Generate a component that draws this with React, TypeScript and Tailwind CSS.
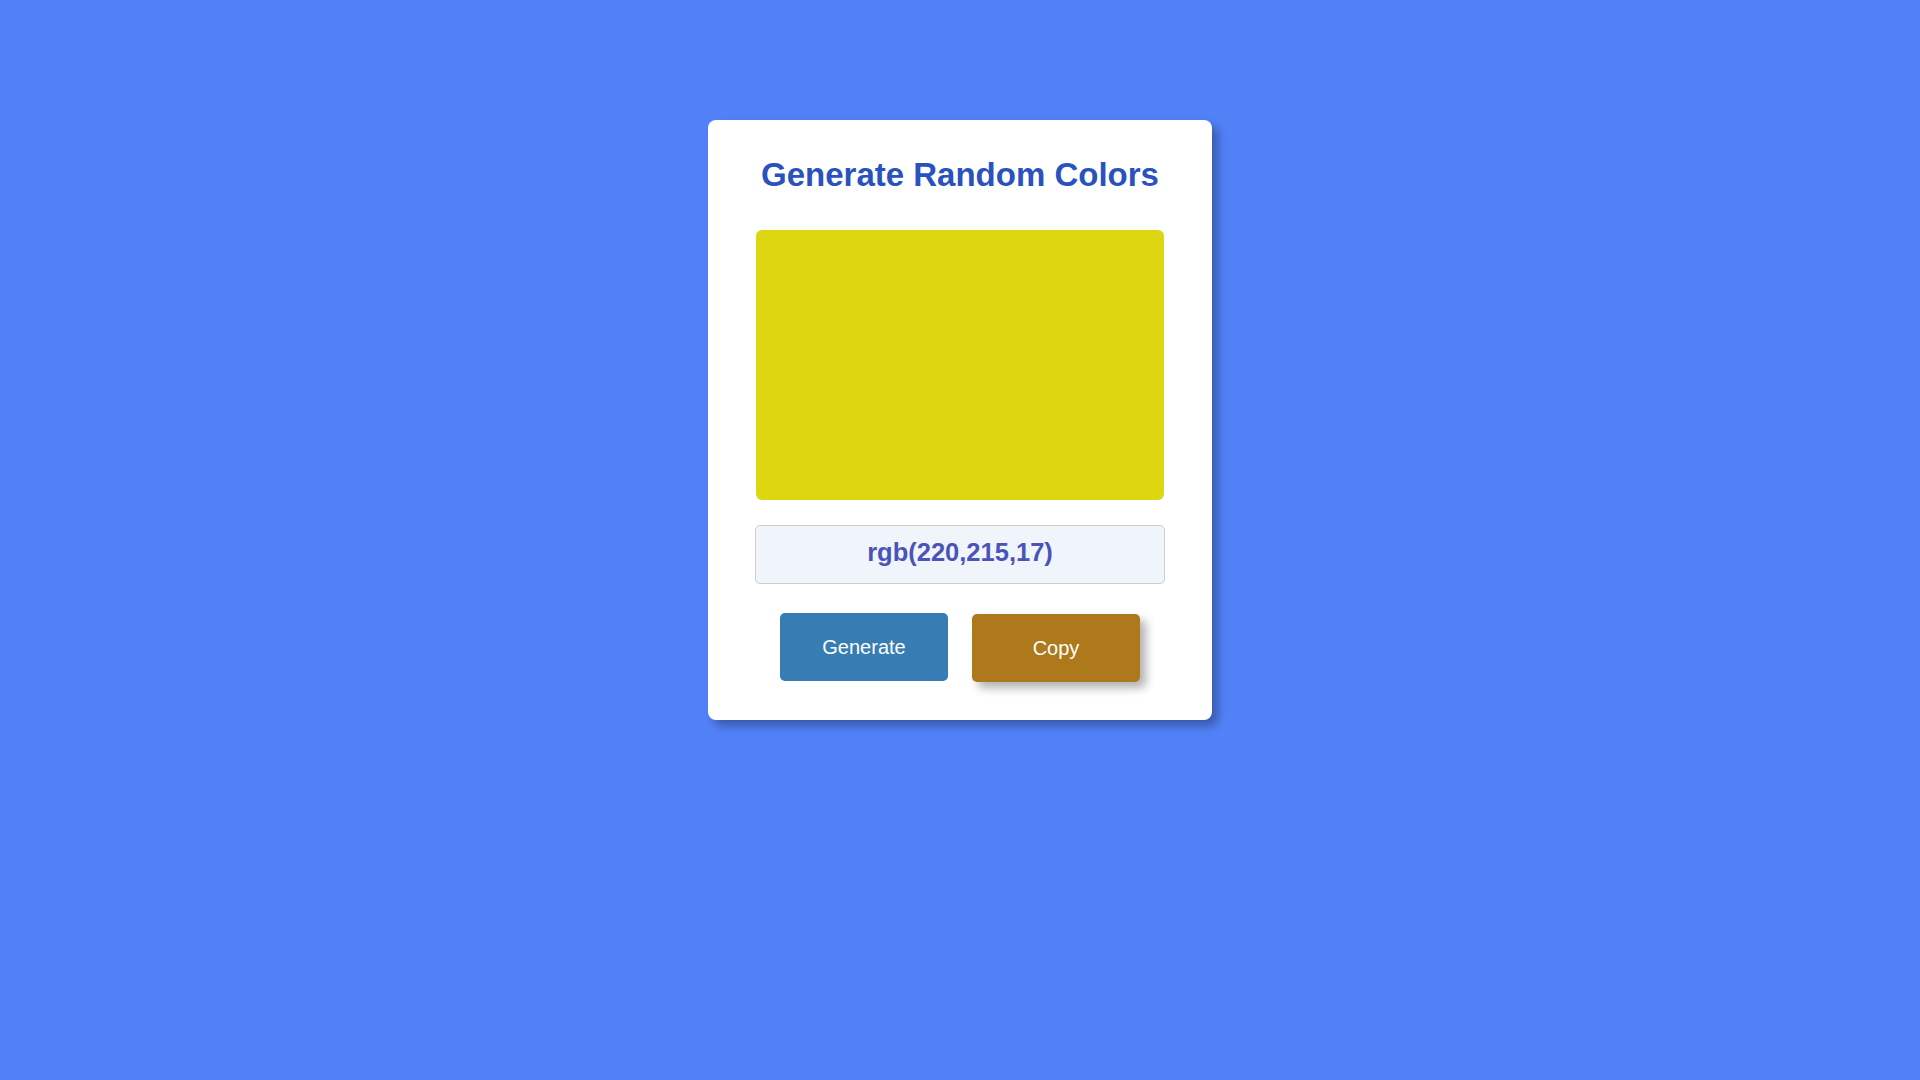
import * as React from "react";

const swatch = { r: 220, g: 215, b: 17 };

export default function App() {
  const value = `rgb(${swatch.r},${swatch.g},${swatch.b})`;

  return (
    <div className="min-h-screen bg-[#5281f7] pt-[120px] font-['Liberation_Sans',Arial,sans-serif]">
      <div className="mx-auto flex h-[600px] w-[504px] flex-col items-center rounded-lg bg-white px-12 pt-[36px] shadow-[6px_6px_10px_rgba(0,0,0,0.3)]">
        <h1 className="text-[33px] font-bold leading-[37px] text-[#2a52be]">
          Generate Random Colors
        </h1>

        <div
          className="mt-[37px] h-[270px] w-[408px] rounded-md"
          style={{ backgroundColor: value }}
        />

        <div className="mt-[25px] flex h-[59px] w-[410px] items-center justify-center rounded-[5px] border border-[#cccccc] bg-[#f0f5fc] pb-[4px] text-[25.5px] font-bold text-[#4a54b8]">
          {value}
        </div>

        <div className="mt-[29px] flex gap-6">
          <button className="h-[68px] w-[168px] rounded-[5px] bg-[#377db4] text-[20px] text-white">
            Generate
          </button>
          <button className="mt-px h-[68px] w-[168px] rounded-[5px] bg-[#ad791b] pb-px text-[20px] text-white shadow-[6px_6px_10px_rgba(0,0,0,0.3)]">
            Copy
          </button>
        </div>
      </div>
    </div>
  );
}
